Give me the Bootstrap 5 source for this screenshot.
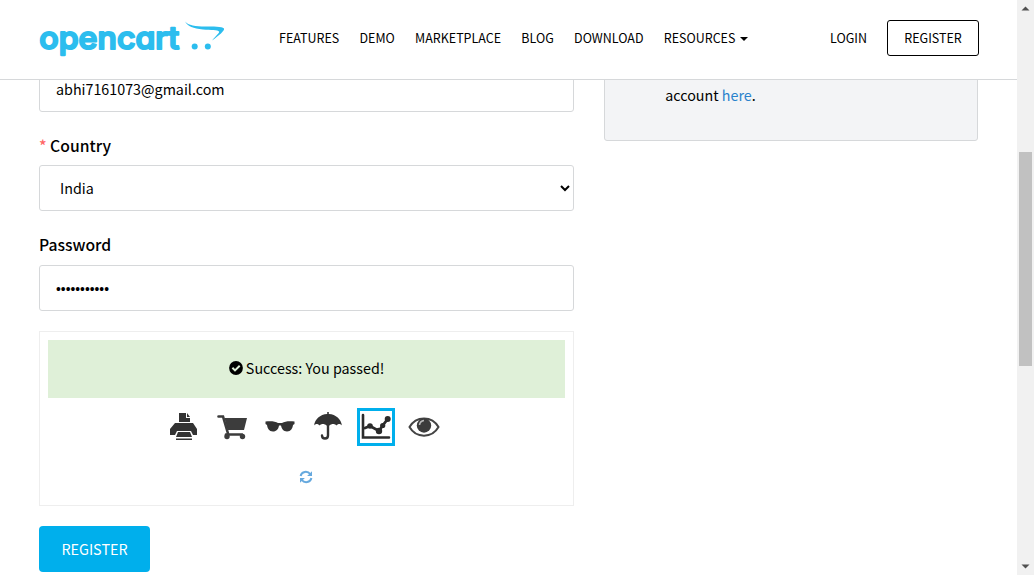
<!DOCTYPE html>
<html lang="en">
<head>
<meta charset="utf-8">
<meta name="viewport" content="width=device-width, initial-scale=1">
<title>OpenCart - Register</title>
<link href="https://cdn.jsdelivr.net/npm/bootstrap@5.3.0/dist/css/bootstrap.min.css" rel="stylesheet">
<style>
  html, body { height: 100%; overflow: hidden; }
  body { font-family: "Noto Sans CJK SC", "Noto Sans", sans-serif; font-size: 14.3px; line-height: 24px; color: #000; background: #fff; }
  .page-view { width: 1017px; height: 575px; overflow: hidden; }
  .site-header { height: 80px; border-bottom: 1px solid #d6d8da; padding: 0 38px 3px 39px; z-index: 5; position: relative; }
  .logo { width: 190px; height: 40px; margin-right: 50px; }
  .menu { gap: 20.3px; font-size: 12.48px; }
  .menu a, .account a { color: #000; text-decoration: none; white-space: nowrap; line-height: 20px; }
  .menu .dropdown-toggle::after { margin-left: 5px; vertical-align: 2px; border-top-width: 4px; border-left-width: 4px; border-right-width: 4px; }
  .account { gap: 20px; font-size: 12.5px; }
  .account .btn-outline { border: 1px solid #000; border-radius: 3px; width: 92px; height: 36px; line-height: 34px; padding: 0; font-size: inherit; }
  .page-body { width: 969px; margin: -14px 0 0 24px; --bs-gutter-x: 30px; }
  .field { height: 46px; border: 1px solid #d6d8da; border-radius: 3px; padding: 0 16px 2px; font-size: 14.3px; line-height: 24px; color: #000; background: #fff; }
  select.field { appearance: auto; padding: 0 16px 2px; }
  .pwd { font-family: "Liberation Sans", sans-serif; font-size: 13.75px; padding: 3px 16px 0; }
  .caption { display: block; font-size: 15.7px; line-height: 24px; font-weight: 500; }
  .req { color: #f66; }
  .side-note { height: 75px; border: 1px solid #d6d8da; border-radius: 3px; background: #f3f4f6; padding: 16px 60px; }
  .side-note a { color: #2a82cc; text-decoration: none; }
  .captcha { height: 175px; border: 1px solid #eee; padding: 8px; margin-top: 20px; }
  .passed { height: 58px; background: #dff0d8; padding-bottom: 2px; }
  .choices { gap: 10px; margin-top: 10px; padding-right: 5px; }
  .choice { width: 38px; height: 38px; border: 3px solid transparent; }
  .choice.picked { border-color: #00afec; }
  .choice svg { display: block; width: 32px; height: 32px; }
  .btn-send { background: #00afec; color: #fff; border: 0; border-radius: 4px; width: 111px; height: 46px; padding: 0; font-size: 14.4px; line-height: 46px; margin-top: 20px; }
  .scroll { width: 17px; height: 575px; background: #f1f1f1; }
  .thumb { width: 13px; height: 214px; background: #c1c1c1; margin-top: 152px; }
  .scroll svg { display: block; width: 17px; height: 17px; }
</style>
</head>
<body>
<div class="d-flex">
  <div class="page-view">
    <header class="site-header bg-white d-flex align-items-center">
      <svg class="logo" viewBox="39 18.500 190 40" role="img" aria-label="opencart">
        <text x="39.300" y="49" textLength="140" lengthAdjust="spacingAndGlyphs" font-family="Inter" font-weight="500" font-size="31.500" fill="#2cbdee" stroke="#2cbdee" stroke-width="2.100" stroke-linejoin="round" style="font-feature-settings:'cv11','ss03'">opencart</text>
        <path d="M185 22c3 4 11 5 20 5 8 0 17 0 19 2 1 2-5 7-12 12 4-5 8-8 7-9-1-2-8-1-16-2-10-1-15-3-18-8z" fill="#2cbdee"/>
        <circle cx="194.700" cy="47" r="3" fill="#2cbdee"/><circle cx="207.800" cy="47" r="3" fill="#2cbdee"/>
      </svg>
      <nav class="menu d-flex">
        <a href="#">FEATURES</a><a href="#">DEMO</a><a href="#">MARKETPLACE</a><a href="#">BLOG</a><a href="#">DOWNLOAD</a><a href="#" class="dropdown-toggle">RESOURCES</a>
      </nav>
      <div class="account d-flex align-items-center ms-auto">
        <a href="#">LOGIN</a><a href="#" class="btn btn-outline">REGISTER</a>
      </div>
    </header>
    <main class="page-body row">
      <form class="col-7" onsubmit="return false">
        <input class="field w-100 d-block" type="text" value="abhi7161073@gmail.com" aria-label="Email">
        <label class="caption" style="margin:22px 0 7px" for="country"><span class="req">*</span> Country</label>
        <select class="field w-100 d-block" id="country"><option>India</option></select>
        <label class="caption" style="margin:22px 0 8px" for="pw">Password</label>
        <input class="field pwd w-100 d-block" id="pw" type="password" value="abcdefghijk">
        <section class="captcha">
          <div class="passed d-flex align-items-center justify-content-center">
            <svg width="14" height="14" viewBox="0 0 14 14" style="margin-right:3px"><circle cx="7" cy="7" r="6.900"/><path d="M3.400 6.800l2.600 2.600 4.700-4.600" fill="none" stroke="#dff0d8" stroke-width="2"/></svg>
            <span>Success: You passed!</span>
          </div>
          <div class="choices d-flex justify-content-center">
            <div class="choice"><svg viewBox="0 0 32 32" fill="#333"><path d="M11 2h7v5h4v4H11zM19 2l3 4h-3zM7 12h18l4 6v6h-4l-2-4H9l-2 4H2v-6zM10 21h12l2 5H8zM8 27.400h16V29H8z"/></svg></div>
            <div class="choice"><svg viewBox="0 0 32 32" fill="#3c3c3c"><path d="M8.500 7H31l-3 12H11.500z"/><path d="M2.500 5.500h4.500l5 17M10 23.500h16" fill="none" stroke="#3c3c3c" stroke-width="2.600" stroke-linecap="round"/><circle cx="11" cy="25.500" r="2.700"/><circle cx="26.500" cy="25.500" r="2.700"/></svg></div>
            <div class="choice"><svg viewBox="0 0 32 32" fill="#333"><path d="M1.500 10.500c4-.5 10-.5 12.500 1.500h4c3-2 8-2 12.500-1.500V13l-1.500 1C28.500 17.500 27 20.500 23 20.500c-3.500 0-5.500-3-6-6h-2c-.5 3.500-2.500 6-6 6-4 0-5.500-3-6-6.500L1.500 13z"/></svg></div>
            <div class="choice"><svg viewBox="0 0 32 32" fill="#333"><path d="M15.200 1h1.600v2C24 3.500 29 8 30 14.500c-1.500-2-4-2-5.500 0-1.800-2-5-2-7 0h-3c-2-2-5.200-2-7 0-1.500-2-4-2-5.500 0C3 8 8 3.500 15.200 3z"/><path d="M16 13v11.500c0 4-6 4-6 0" fill="none" stroke="#333" stroke-width="2.400" stroke-linecap="round"/></svg></div>
            <div class="choice picked"><svg viewBox="0 0 32 32" fill="none" stroke="#2b2b2b" stroke-linecap="round"><path d="M3 4v22.500h26" stroke-width="2.600"/><path d="M5 17l5-2 9 5 3.700-5.500 5-6.500" stroke-width="2.800"/><g fill="#2b2b2b" stroke="none"><circle cx="10" cy="15" r="2.800"/><circle cx="19" cy="20" r="3.200"/><circle cx="22.700" cy="14.500" r="2.600"/><circle cx="27.700" cy="8" r="3"/></g></svg></div>
            <div class="choice"><svg viewBox="0 0 32 32"><path d="M1.500 16C8 4.500 24 4.500 30.500 16 24 27.500 8 27.500 1.500 16z" fill="#fff" stroke="#444" stroke-width="2"/><circle cx="16" cy="14.500" r="7.200" fill="#3c3c3c"/><path d="M11.500 14c.3-2.600 2-4.200 4.500-4.500" fill="none" stroke="#bbb" stroke-width="1.600"/></svg></div>
          </div>
          <div class="text-center" style="margin-top:24px;padding-right:1px;line-height:14px"><svg width="14" height="14" viewBox="0 0 14 14" class="d-block mx-auto"><path d="M1.600 6C2.600 1.300 8.500.6 11.200 4M12.400 8C11.400 12.700 5.500 13.400 2.800 10" fill="none" stroke="#66a9de" stroke-width="2"/><path d="M13 1.200v4.900H8.100zM1 12.800V7.900h4.900z" fill="#66a9de"/></svg></div>
        </section>
        <button class="btn btn-send">REGISTER</button>
      </form>
      <aside class="col-5"><div class="side-note">account <a href="#">here</a>.</div></aside>
    </main>
  </div>
  <div class="scroll d-flex flex-column align-items-center">
    <svg viewBox="0 0 17 17" style="margin-bottom:-17px"><path d="M4.500 10.500L8.500 6.500l4 4z" fill="#505050"/></svg>
    <div class="thumb"></div>
    <svg viewBox="0 0 17 17" class="mt-auto"><path d="M4.500 6.500l4 4 4-4z" fill="#505050"/></svg>
  </div>
</div>
<script src="https://cdn.jsdelivr.net/npm/bootstrap@5.3.0/dist/js/bootstrap.bundle.min.js"></script>
</body>
</html>
